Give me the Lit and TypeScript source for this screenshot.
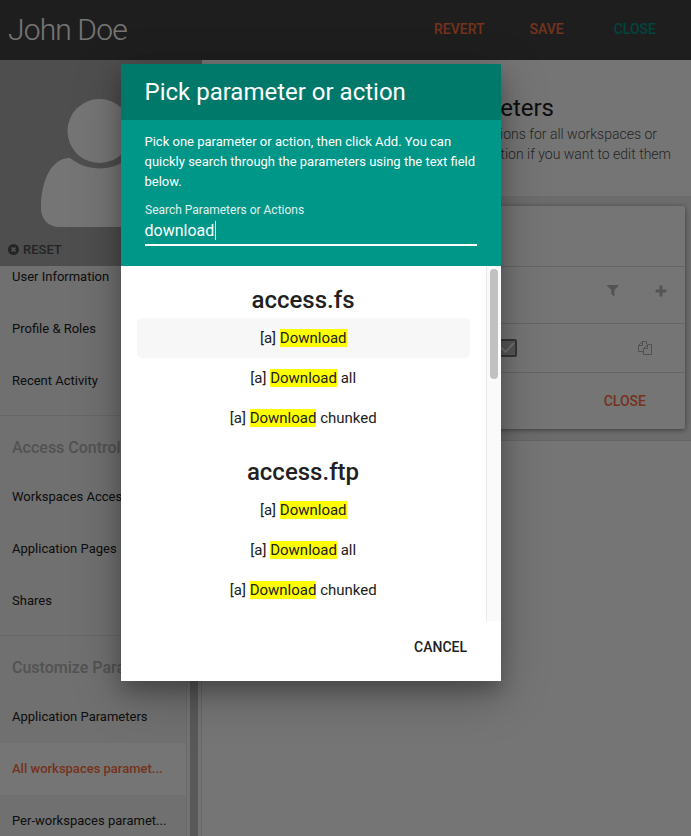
import { LitElement, html, css } from "lit";
import { customElement } from "lit/decorators.js";

const MENU = [
  { title: "", items: ["User Information", "Profile & Roles", "Recent Activity"] },
  { title: "Access Control", items: ["Workspaces Access", "Application Pages", "Shares"] },
  {
    title: "Customize Parameters",
    items: ["Application Parameters", "All workspaces paramet...", "Per-workspaces paramet..."],
  },
];
const ACTIVE = "All workspaces paramet...";

const RESULTS = [
  { plugin: "access.fs", actions: ["", " all", " chunked"] },
  { plugin: "access.ftp", actions: ["", " all", " chunked"] },
];

@customElement("user-sidebar")
export class UserSidebar extends LitElement {
  static styles = css`
    :host { display: flex; flex-direction: column; width: 202px; flex: none; overflow: hidden; }
    .avatar { flex: none; height: 206px; background: #aaa; display: flex; flex-direction: column; box-sizing: border-box; padding-top: 39px; width: 202px; }
    .avatar svg.person { display: block; margin-left: 40px; width: 119px; height: 129px; flex: none; }
    .reset { display: flex; align-items: center; gap: 4px; margin: 13px 0 0 8px; height: 16px; font-size: 13px; font-weight: 500; color: #4f4f4f; }
    .scroll { flex: 1; min-height: 0; display: flex; background: #f3f3f3; border-right: 1px solid #e0e0e0; }
    .menu { width: 186px; flex: none; overflow: hidden; }
    .group { padding-bottom: 8px; }
    .group:first-child { margin-top: -15px; }
    .group + .group { border-top: 1px solid #e0e0e0; padding-top: 7px; }
    .title { height: 48px; line-height: 49px; padding-left: 12px; font-size: 16px; font-weight: 500; color: #b3b3b3; white-space: nowrap; }
    .item { height: 52px; line-height: 52px; padding-left: 12px; font-size: 13px; color: #212121; white-space: nowrap; }
    .active { background: #fff; color: #ff6e40; font-weight: 500; }
    .track { flex: 1; background: #fafafa; border-left: 1px solid #e8e8e8; display: flex; padding-left: 3px; }
    .thumb { width: 8px; background: #c1c1c1; }
  `;
  render() {
    return html`
      <div class="avatar">
        <svg class="person" viewBox="0 0 119 129" fill="#fff">
          <circle cx="59.5" cy="32" r="32" />
          <path d="M30 59C11 59 1 82 1 109C1 120 8 128 20 128H99C111 128 118 120 118 109C118 82 108 59 89 59C71 73 48 73 30 59Z" />
        </svg>
        <div class="reset">
          <svg width="11" height="11" viewBox="0 0 11 11"><circle cx="5.5" cy="5.5" r="5.5" fill="#4f4f4f" /><path d="M3.5 3.5L7.5 7.5M7.5 3.5L3.5 7.5" stroke="#aaa" stroke-width="1.8" /></svg>
          <span>RESET</span>
        </div>
      </div>
      <div class="scroll">
        <div class="menu">
          ${MENU.map((g) => html`<div class="group">
            ${g.title ? html`<div class="title">${g.title}</div>` : ""}
            ${g.items.map((i) => html`<div class="item ${i === ACTIVE ? "active" : ""}">${i}</div>`)}
          </div>`)}
        </div>
        <div class="track"><div class="thumb"></div></div>
      </div>`;
  }
}

@customElement("parameters-panel")
export class ParametersPanel extends LitElement {
  static styles = css`
    :host { display: flex; flex-direction: column; flex: 1; min-width: 0; background: #fff; }
    .head { box-sizing: border-box; height: 136px; flex: none; padding-top: 34px; text-align: right; white-space: nowrap; }
    .h { font-size: 24px; line-height: 28px; color: #212121; padding-right: 137px; }
    .d { font-size: 14px; line-height: 20px; font-weight: 300; color: #505050; }
    .d1 { padding-right: 34px; padding-top: 2px; }
    .d2 { padding-right: 20px; }
    .body { height: 245px; flex: none; box-sizing: border-box; padding: 10px 6px 12px 16px; background: #ececec; border-bottom: 1px solid #dcdcdc; }
    .card { height: 223px; background: #fff; border-radius: 2px; box-shadow: 0 1px 6px rgba(0,0,0,.2), 0 1px 4px rgba(0,0,0,.3); display: flex; flex-direction: column; }
    .row { display: flex; align-items: center; justify-content: flex-end; box-sizing: border-box; border-bottom: 1px solid #dcdcdc; }
    .r1 { height: 61px; }
    .r2 { height: 57px; gap: 36px; padding: 0 18px 8px 0; }
    .r3 { height: 49px; padding-right: 33px; gap: 121px; }
    .r4 { flex: 1; border: 0; padding-right: 39px; color: #ff6e40; font-size: 14px; font-weight: 500; }
    svg { display: block; }
  `;
  render() {
    return html`
      <div class="head">
        <div class="h">Parameters</div>
        <div class="d d1">actions for all workspaces or</div>
        <div class="d d2">action if you want to edit them</div>
      </div>
      <div class="body">
        <div class="card">
          <div class="row r1"></div>
          <div class="row r2">
            <svg width="12" height="12" viewBox="0 0 12 12" fill="#b8b8b8"><path d="M.4 0H11.1Q11.8.6 11.1 1.2L7.5 4.9V10.8Q7.4 11.6 6.7 11.2L4.3 9V4.9L.4 1.2Q-.3.6.4 0Z" /></svg>
            <svg width="12" height="12" viewBox="0 0 12 12" fill="#b8b8b8"><path d="M4.5.6H7.5V4.4H11.4V7.5H7.5V11.4H4.5V7.5H.6V4.4H4.5Z" /></svg>
          </div>
          <div class="row r3">
            <svg width="19" height="18" viewBox="0 0 19 18"><rect x="1" y="1" width="17" height="16" rx="1" fill="#bdbdbd" stroke="#757575" stroke-width="2" /><path d="M3.5 8.5L7.5 13L16 4" fill="none" stroke="#fff" stroke-width="1.7" /></svg>
            <svg width="14" height="14" viewBox="0 0 14 14" fill="none" stroke="#b0b0b0" stroke-width="1"><path d="M8.5 3V.5H4.5L.5 4.5V10.5H5.5M4.5.5V4.5H.5M9.5 3.5L5.5 7.5V13.5H13.5V3.5H9.5ZM9.5 3.5V7.5H5.5" /></svg>
          </div>
          <div class="row r4">CLOSE</div>
        </div>
      </div>`;
  }
}

@customElement("picker-dialog")
export class PickerDialog extends LitElement {
  static styles = css`
    :host { display: flex; flex-direction: column; width: 380px; height: 617px; background: #fff; box-shadow: 0 14px 45px rgba(0,0,0,.25), 0 10px 18px rgba(0,0,0,.22); color: #212121; }
    .title { height: 56px; flex: none; line-height: 56px; padding-left: 23.5px; background: #00796b; color: #fff; font-size: 24px; }
    .search { height: 146px; flex: none; box-sizing: border-box; padding: 12px 24px 0; background: #009688; color: #fff; }
    .intro { font-size: 13px; line-height: 20px; height: 60px; white-space: nowrap; margin-left: -.5px; }
    .label { font-size: 12px; line-height: 16px; margin-top: 10px; opacity: .88; }
    .input { display: flex; align-items: center; height: 24px; font-size: 16px; border-bottom: 2px solid #fff; padding-bottom: 2px; }
    .input span:first-child { margin-left: -.5px; }
    .caret { width: 1px; height: 19px; background: #fff; margin-left: .5px; }
    .list { height: 355px; flex: none; display: flex; }
    .results { flex: 1; padding: 16px 16px 0; overflow: hidden; text-align: center; }
    .plugin { font-size: 24px; line-height: 36px; height: 36px; font-weight: 500; padding-right: 1px; }
    .group + .group { margin-top: 16px; }
    .action { height: 40px; line-height: 40px; font-size: 15px; border-radius: 5px; white-space: pre; padding-right: .5px; }
    .hover { background: #f7f7f7; }
    mark { background: #ff0; color: inherit; }
    .track { width: 15px; box-sizing: border-box; flex: none; background: #fafafa; border-left: 1px solid #e8e8e8; padding: 3px 0 0 3px; }
    .thumb { width: 8px; height: 110px; border-radius: 4px; background: #c1c1c1; }
    .foot { flex: 1; display: flex; align-items: center; justify-content: flex-end; padding: 0 34px 8px 0; font-size: 14px; font-weight: 500; }
  `;
  render() {
    return html`
      <div class="title">Pick parameter or action</div>
      <div class="search">
        <div class="intro">Pick one parameter or action, then click Add. You can<br />quickly search through the parameters using the text field<br />below.</div>
        <div class="label">Search Parameters or Actions</div>
        <div class="input"><span>download</span><span class="caret"></span></div>
      </div>
      <div class="list">
        <div class="results">
          ${RESULTS.map((g, gi) => html`<div class="group">
            <div class="plugin">${g.plugin}</div>
            ${g.actions.map((a, i) => html`<div class="action ${gi + i === 0 ? "hover" : ""}">[a] <mark>Download</mark>${a}</div>`)}
          </div>`)}
        </div>
        <div class="track"><div class="thumb"></div></div>
      </div>
      <div class="foot">CANCEL</div>`;
  }
}

@customElement("app-root")
export class AppRoot extends LitElement {
  static styles = css`
    :host { display: block; position: relative; width: 691px; height: 836px; overflow: hidden; font-family: Roboto, sans-serif; background: #fff; }
    .page { height: 836px; display: flex; flex-direction: column; }
    .bar { height: 60px; flex: none; box-sizing: border-box; padding: 0 35px 2px 8px; display: flex; align-items: center; background: #424242; color: #fff; font-size: 14px; font-weight: 500; }
    .name { flex: 1; font-size: 30px; font-weight: 300; letter-spacing: -.85px; }
    .btn { color: #ff6e40; margin-left: 45px; }
    .teal { color: #009688; margin-left: 50px; }
    .main { flex: 1; min-height: 0; display: flex; }
    .overlay { position: absolute; inset: 0; box-sizing: border-box; background: rgba(0,0,0,.54); display: flex; justify-content: center; align-items: flex-start; padding: 64px 69px 0 0; }
  `;
  render() {
    return html`
      <div class="page">
        <div class="bar">
          <span class="name">John Doe</span>
          <span class="btn">REVERT</span><span class="btn">SAVE</span><span class="btn teal">CLOSE</span>
        </div>
        <div class="main"><user-sidebar></user-sidebar><parameters-panel></parameters-panel></div>
      </div>
      <div class="overlay"><picker-dialog></picker-dialog></div>`;
  }
}
